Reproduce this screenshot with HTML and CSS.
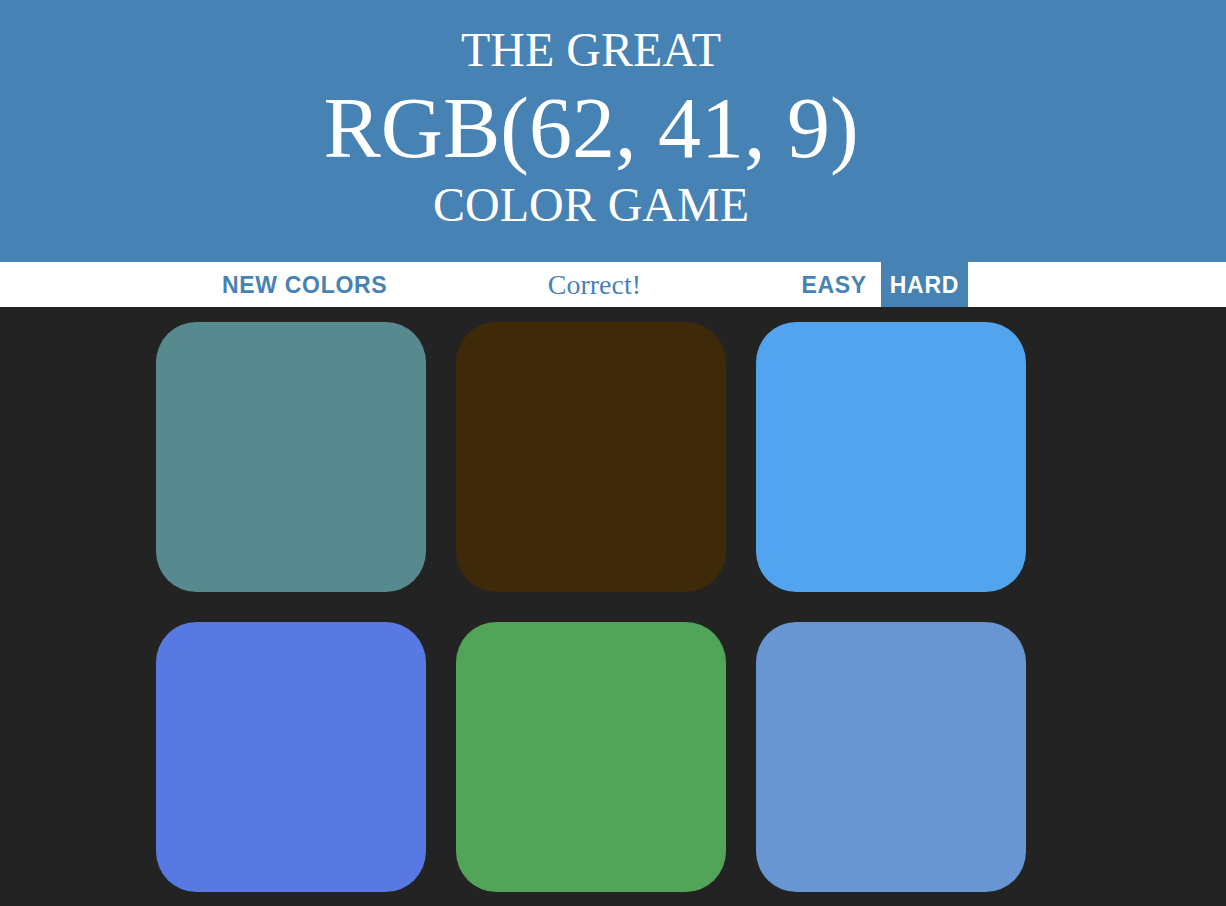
FILE: index.html
```html
<!DOCTYPE html>
<html>
<head>
<meta charset="utf-8">
<title>Color Game</title>
<link rel="stylesheet" href="styles.css">
</head>
<body>
<header class="header">
  <div class="header-inner">
    <div class="title-small">The Great</div>
    <div class="title-rgb">RGB(62, 41, 9)</div>
    <div class="title-small title-last">Color Game</div>
  </div>
</header>
<div class="stripe">
  <div class="stripe-inner">
    <button class="btn btn-new">New Colors</button>
    <span class="message">Correct!</span>
    <button class="btn">Easy</button>
    <button class="btn selected">Hard</button>
  </div>
</div>
<main class="board">
  <div class="grid">
    <div class="square sq1"></div>
    <div class="square sq2"></div>
    <div class="square sq3"></div>
    <div class="square sq4"></div>
    <div class="square sq5"></div>
    <div class="square sq6"></div>
  </div>
</main>
</body>
</html>
```

FILE: styles.css
```css
html, body {
  margin: 0;
  padding: 0;
}
body {
  background: #232323;
  min-height: 906px;
  font-family: "Liberation Serif", "Times New Roman", serif;
}
.header {
  background: #4682b4;
  color: #ffffff;
  height: 262px;
  box-sizing: border-box;
  padding-top: 24px;
}
.header-inner {
  width: 1182px;
  text-align: center;
  text-transform: uppercase;
}
.title-small {
  font-size: 48px;
  line-height: 52px;
}
.title-last {
  line-height: 50px;
}
.title-rgb {
  font-size: 86px;
  line-height: 104px;
}
.stripe {
  background: #ffffff;
  height: 45px;
}
.stripe-inner {
  width: 1182px;
  height: 45px;
  display: flex;
  justify-content: center;
  align-items: stretch;
  gap: 6px;
}
.btn {
  border: none;
  background: none;
  margin: 0;
  padding: 0 8px;
  height: 45px;
  font-family: "Liberation Sans", Arial, sans-serif;
  font-weight: 700;
  font-size: 23px;
  letter-spacing: 0.7px;
  text-transform: uppercase;
  color: #4682b4;
  line-height: 46px;
  cursor: pointer;
}
.btn.selected {
  background: #4682b4;
  color: #ffffff;
  padding: 0 9px;
}
.message {
  width: 386px;
  text-align: center;
  font-size: 28px;
  line-height: 45px;
  color: #4682b4;
}
.board {
  width: 1182px;
}
.grid {
  width: 900px;
  margin: 0 auto;
  padding-top: 15px;
  display: grid;
  grid-template-columns: repeat(3, 270px);
  column-gap: 30px;
  row-gap: 30px;
  justify-content: center;
}
.square {
  width: 270px;
  height: 270px;
  border-radius: 15%;
}
.sq1 { background: rgb(87, 138, 143); }
.sq2 { background: rgb(62, 41, 9); }
.sq3 { background: rgb(82, 164, 238); }
.sq4 { background: rgb(88, 121, 226); }
.sq5 { background: rgb(82, 165, 88); }
.sq6 { background: rgb(104, 150, 210); }
```
